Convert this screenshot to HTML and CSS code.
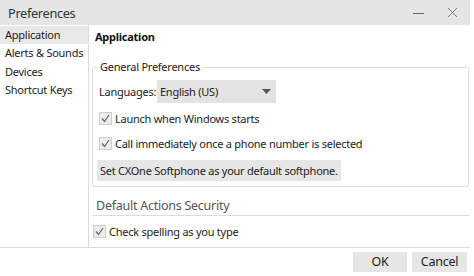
FILE: index.html
```html
<!DOCTYPE html>
<html>
<head>
<meta charset="utf-8">
<link rel="stylesheet" href="styles.css">
</head>
<body>
<div class="window">
  <div class="titlebar">
    <span class="title">Preferences</span>
    <span class="winbtn"><svg width="12" height="12" viewBox="0 0 12 12"><line x1="0" y1="6.5" x2="11" y2="6.5" stroke="#666" stroke-width="1"/></svg></span>
    <span class="winbtn"><svg width="12" height="12" viewBox="0 0 12 12"><path d="M1 1 L10 10 M10 1 L1 10" stroke="#777" stroke-width="1" fill="none"/></svg></span>
  </div>
  <div class="content">
    <nav class="sidebar">
      <div class="nav-item active">Application</div>
      <div class="nav-item">Alerts &amp; Sounds</div>
      <div class="nav-item">Devices</div>
      <div class="nav-item">Shortcut Keys</div>
    </nav>
    <main class="main">
      <div class="heading">Application</div>
      <fieldset class="group">
        <legend>General Preferences</legend>
        <div class="lang-row">
          <span class="lang-label">Languages:</span>
          <div class="select">
            <span>English (US)</span>
            <svg width="9" height="5" viewBox="0 0 9 5"><path d="M0 0 L9 0 L4.5 5 Z" fill="#555"/></svg>
          </div>
        </div>
        <label class="check-row">
          <span class="check"><svg width="11" height="11" viewBox="0 0 11 11"><path d="M2 5.5 L4.5 8.5 L9 2" stroke="#666" stroke-width="1.2" fill="none"/></svg></span>
          <span>Launch when Windows starts</span>
        </label>
        <label class="check-row">
          <span class="check"><svg width="11" height="11" viewBox="0 0 11 11"><path d="M2 5.5 L4.5 8.5 L9 2" stroke="#666" stroke-width="1.2" fill="none"/></svg></span>
          <span>Call immediately once a phone number is selected</span>
        </label>
        <div class="default-btn">Set CXOne Softphone as your default softphone.</div>
      </fieldset>
      <div class="section-title">Default Actions Security</div>
      <label class="check-row spell">
        <span class="check"><svg width="11" height="11" viewBox="0 0 11 11"><path d="M2 5.5 L4.5 8.5 L9 2" stroke="#666" stroke-width="1.2" fill="none"/></svg></span>
        <span>Check spelling as you type</span>
      </label>
    </main>
  </div>
  <div class="footer">
    <div class="btn ok">OK</div>
    <div class="btn">Cancel</div>
  </div>
</div>
</body>
</html>
```
FILE: styles.css
```css
html, body {
  margin: 0;
  padding: 0;
  background: #ffffff;
}
* {
  box-sizing: border-box;
}
body {
  width: 474px;
  height: 276px;
  overflow: hidden;
  font-family: "Noto Sans", "Open Sans", sans-serif;
  font-size: 11px;
  letter-spacing: -0.25px;
  color: #222;
}
.window {
  width: 470px;
  height: 276px;
  display: flex;
  flex-direction: column;
}
.titlebar {
  height: 25px;
  flex: none;
  background: #e5e5e5;
  display: flex;
  align-items: center;
  padding-left: 8px;
  font-size: 12.8px;
  letter-spacing: -0.35px;
  line-height: 18px;
  color: #333;
}
.title {
  flex: 1;
}
.winbtn {
  width: 34px;
  height: 25px;
  display: flex;
  align-items: center;
  justify-content: center;
}
.content {
  flex: none;
  height: 222px;
  display: flex;
  overflow: hidden;
}
.sidebar {
  width: 89px;
  flex: none;
  border-right: 1px solid #dcdcdc;
  padding-top: 1px;
}
.nav-item {
  height: 18.4px;
  line-height: 18px;
  padding-left: 5px;
  white-space: nowrap;
}
.nav-item.active {
  background: #e8e8e8;
}
.main {
  flex: 1;
  padding: 0 1px 0 3px;
}
.heading {
  font-weight: bold;
  padding: 4px 0 0 3px;
  height: 20px;
  line-height: 16px;
  color: #111;
}
.group {
  margin: 15px 0 0 0;
  padding: 0 4px 5px 4px;
  border: 1px solid #dcdcdc;
  border-radius: 2px;
  min-width: 0;
}
.group legend {
  padding: 0 3px;
  margin-left: 0;
  line-height: 14px;
  height: 14px;
}
.lang-row {
  display: flex;
  align-items: center;
  margin-top: 6px;
  padding-left: 2px;
  height: 23px;
}
.lang-label {
  width: 58px;
}
.select {
  width: 119px;
  height: 23px;
  background: #e3e3e3;
  display: flex;
  align-items: center;
  justify-content: space-between;
  padding: 0 5px 0 3px;
}
.check-row {
  display: flex;
  align-items: center;
  gap: 3px;
  height: 25px;
  line-height: 16px;
  padding-left: 2px;
}
.lang-row + .check-row {
  margin-top: 3px;
}
.check {
  width: 13px;
  height: 13px;
  border: 1px solid #cfcfcf;
  background: #ececec;
  display: flex;
}
.default-btn {
  display: inline-block;
  margin-top: 4px;
  background: #e6e6e6;
  padding: 0 3px;
  height: 21px;
  line-height: 21px;
  vertical-align: top;
}
.section-title {
  margin-top: 9px;
  padding-left: 4px;
  font-size: 12.5px;
  color: #555;
  height: 20px;
  line-height: 19px;
  border-bottom: 1px solid #dcdcdc;
}
.spell {
  margin-top: 3px;
  padding-left: 1px;
}
.footer {
  flex: none;
  border-top: 1px solid #dcdcdc;
  display: flex;
  justify-content: flex-end;
  gap: 5px;
  padding-top: 4px;
  padding-right: 3px;
}
.btn {
  width: 55px;
  height: 20px;
  line-height: 20px;
  text-align: center;
  background: #e6e6e6;
  font-size: 12.5px;
}
.btn.ok {
  width: 54px;
}
```
